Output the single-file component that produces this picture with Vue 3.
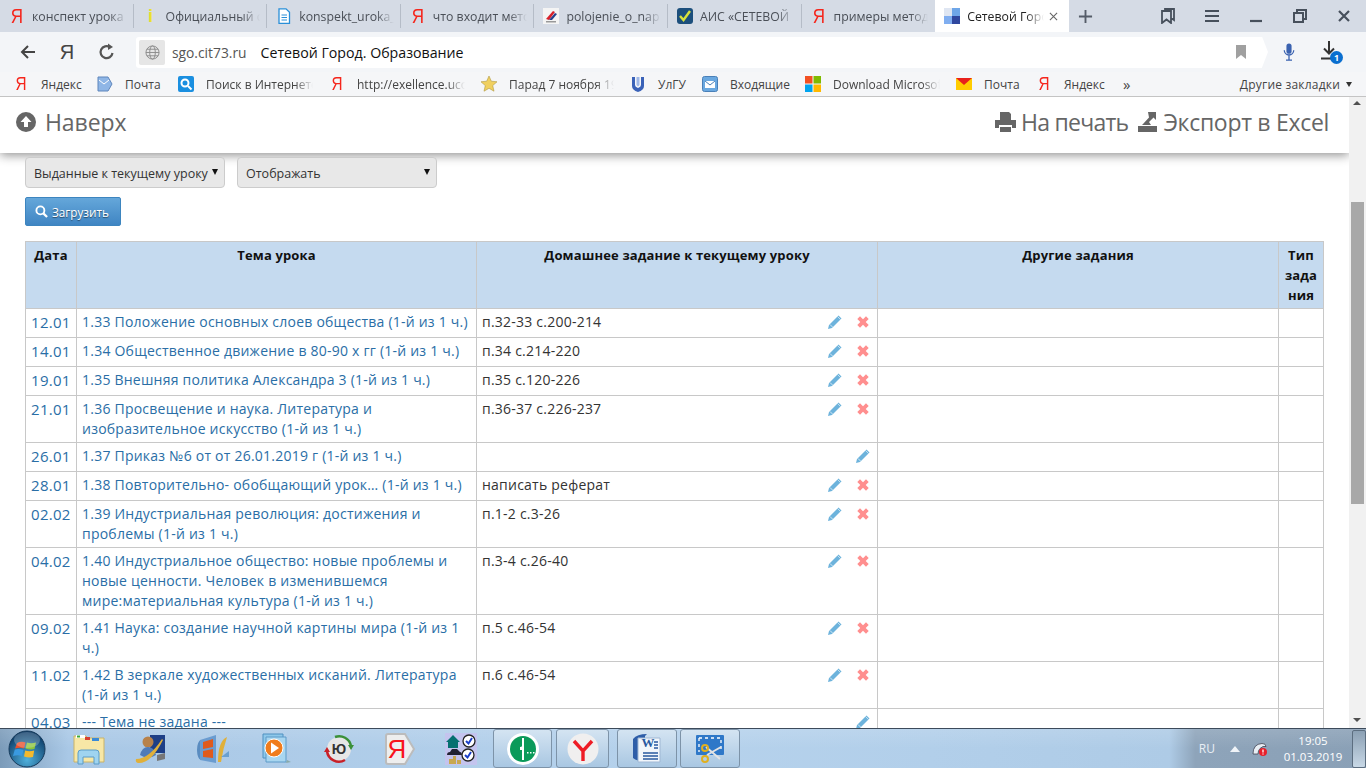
<template>
  <div class="screen">
    <!-- вкладки -->
    <div class="tabs">
      <div
        v-for="t in tabs"
        :key="t.title"
        :class="['tab', { active: t.active }]"
      >
        <span v-if="t.icon === 'ya'" class="ya">Я</span>
        <span v-else-if="t.icon === 'info'" class="info-i">i</span>
        <svg v-else class="tab-ico" viewBox="0 0 16 16"><use :href="'#' + t.icon" /></svg>
        <span class="fade tab-title">{{ t.title }}</span>
        <svg v-if="t.active" class="tab-close" viewBox="0 0 10 10"><path d="M1 1l8 8M9 1l-8 8" /></svg>
      </div>
      <svg class="tab-plus" viewBox="0 0 16 16"><path d="M8 1v14M1 8h14" /></svg>
      <div class="win-btns">
        <svg viewBox="0 0 16 16"><path d="M2 3h9v12l-4.500-3.500L2 15zM5 3V1h9v11l-3-2" fill="none" stroke="#47505c" stroke-width="1.800" /></svg>
        <svg viewBox="0 0 16 16"><path d="M1 3h14M1 8h14M1 13h14" fill="none" stroke="#47505c" stroke-width="2" /></svg>
        <svg viewBox="0 0 16 16"><path d="M2 13h12" fill="none" stroke="#47505c" stroke-width="2.200" /></svg>
        <svg viewBox="0 0 16 16"><path d="M2 5h9v9H2zM5 5V2h9v9h-3" fill="none" stroke="#47505c" stroke-width="2" /></svg>
        <svg viewBox="0 0 16 16"><path d="M3 3l10 10M13 3L3 13" fill="none" stroke="#47505c" stroke-width="2.200" /></svg>
      </div>
    </div>

    <!-- адресная строка -->
    <div class="toolbar">
      <svg class="nav-ico" viewBox="0 0 18 18"><path d="M16 9H3M9 3L3 9l6 6" fill="none" stroke="#444" stroke-width="2" /></svg>
      <span class="nav-ya">Я</span>
      <svg class="nav-ico" viewBox="0 0 18 18"><path d="M14.500 10A6 6 0 1 1 12 4.200" fill="none" stroke="#555" stroke-width="2.200" /><path d="M10 .5l5 3.500-5 3z" fill="#555" /></svg>
      <div class="address">
        <span class="globe-box">
          <svg viewBox="0 0 16 16"><g fill="none" stroke="#8c8c8c"><circle cx="8" cy="8" r="7" /><ellipse cx="8" cy="8" rx="3" ry="7" /><path d="M1 8h14M2 4.500h12M2 11.500h12" /></g></svg>
        </span>
        <span class="host">sgo.cit73.ru</span>
        <span class="page-title">Сетевой Город. Образование</span>
        <svg class="addr-mark" viewBox="0 0 10 14"><path d="M0 0h10v14l-5-4-5 4z" /></svg>
      </div>
      <svg class="mic" viewBox="0 0 14 22"><rect x="4" y="1" width="6" height="12" rx="3" fill="#3a62b0" /><path d="M1.500 9a5.500 5.500 0 0 0 11 0M7 15v5M3.500 20.500h7" fill="none" stroke="#3a62b0" stroke-width="1.500" /></svg>
      <div class="download">
        <svg viewBox="0 0 16 20"><path d="M8 1v12M3 8.500l5 5 5-5M0 18.500h13" fill="none" stroke="#333" stroke-width="2" /></svg>
        <span class="dl-badge">1</span>
      </div>
    </div>

    <!-- закладки -->
    <div class="bookmarks">
      <div
        v-for="b in bookmarks"
        :key="b.text + b.w"
        class="bm"
        :style="{ width: b.w + 'px' }"
      >
        <span v-if="b.icon === 'ya'" class="ya">Я</span>
        <svg v-else class="bm-ico" viewBox="0 0 16 16"><use :href="'#' + b.icon" /></svg>
        <span :class="['bm-title', { fade: b.cut }]">{{ b.text }}</span>
      </div>
      <span class="bm-more">»</span>
      <span class="bm-other">Другие закладки</span>
      <span class="bm-caret"></span>
    </div>

    <!-- страница -->
    <div class="viewport">
      <div class="page">
        <div class="topbar">
          <a class="top-link">
            <svg class="up-ico" viewBox="0 0 20 20"><circle cx="10" cy="10" r="10" fill="#666" /><path d="M10 4l5.500 6H12v5H8v-5H4.500z" fill="#fff" /></svg>
            Наверх
          </a>
          <div class="top-right">
            <a class="top-link print-link">
              <svg class="print-ico" viewBox="0 0 21 20"><path d="M5 0h9l2 2v6H5zM0 8h21v8h-4v-3H4v3H0zM5 15h11v5H5z" fill="#666" /></svg>
              На печать
            </a>
            <a class="top-link">
              <svg class="export-ico" viewBox="0 0 19 20"><path d="M0 14h19v6H0zM10 0h8v8l-2.500-2.500L11 10l2 3H4l1-1 6-6.500z" fill="#666" /></svg>
              Экспорт в Excel
            </a>
          </div>
        </div>

        <div class="content">
          <div class="filters">
            <label class="sel-wrap"><select class="sel"><option>Выданные к текущему уроку</option></select></label>
            <label class="sel-wrap"><select class="sel"><option>Отображать</option></select></label>
          </div>
          <button class="load-btn">
            <svg viewBox="0 0 14 14"><circle cx="5.800" cy="5.800" r="4.300" fill="none" stroke="#fff" stroke-width="2" /><path d="M9 9l4 4" stroke="#fff" stroke-width="2.400" /></svg>
            Загрузить
          </button>

          <table class="lessons">
            <colgroup>
              <col class="c-date" />
              <col class="c-topic" />
              <col class="c-hw" />
              <col class="c-other" />
              <col class="c-type" />
            </colgroup>
            <thead>
              <tr>
                <th>Дата</th>
                <th>Тема урока</th>
                <th>Домашнее задание к текущему уроку</th>
                <th>Другие задания</th>
                <th>Тип<br />зада<br />ния</th>
              </tr>
            </thead>
            <tbody>
              <tr v-for="r in rows" :key="r.date">
                <td><a class="date">{{ r.date }}</a></td>
                <td><a>{{ r.topic }}</a></td>
                <td>
                  <div class="hw">
                    <span class="hw-text">{{ r.hw }}</span>
                    <svg class="pencil" viewBox="0 0 16 16"><use href="#pencil" /></svg>
                    <svg v-if="r.hw" class="remove" viewBox="0 0 12 12"><use href="#cross" /></svg>
                  </div>
                </td>
                <td></td>
                <td></td>
              </tr>
            </tbody>
          </table>
        </div>
      </div>

      <div class="scrollbar">
        <span class="arrow-up"></span>
        <div class="thumb"></div>
        <span class="arrow-down"></span>
      </div>
    </div>

    <!-- панель задач -->
    <div class="taskbar">
      <div class="start">
        <svg viewBox="0 0 38 38">
          <defs>
            <radialGradient id="orb" cx="50%" cy="80%" r="75%">
              <stop offset="0" stop-color="#4fb0dc" />
              <stop offset="1" stop-color="#0b3a66" />
            </radialGradient>
          </defs>
          <circle cx="19" cy="19" r="18" fill="url(#orb)" stroke="#173a5a" />
          <path d="M9 13q4-2 8.500-.5L16 18.500q-4-1.500-9 0z" fill="#e8502c" />
          <path d="M19 12.500q4 1.500 9 0l-1.500 6.500q-4 1-9-.5z" fill="#8cc43c" />
          <path d="M6.800 19.500q4-1 8.700.5L14 26q-4-1.500-9 0z" fill="#3a9ae0" />
          <path d="M17.200 20.500q4 1.500 9 0L25 27q-4 1-9-.5z" fill="#f4b92c" />
          <ellipse cx="19" cy="10" rx="13" ry="8" fill="#fff" opacity=".22" />
        </svg>
      </div>

      <div v-for="a in pinned" :key="a.id" class="pin" :style="{ width: a.w + 'px' }">
        <svg class="app-ico" viewBox="0 0 32 32"><use :href="'#' + a.id" /></svg>
        <span v-if="a.glyph" :class="['app-glyph', 'glyph-' + a.id]">{{ a.glyph }}</span>
      </div>

      <div v-for="a in running" :key="a.id" class="run" :style="{ width: a.w + 'px', marginLeft: a.gap + 'px' }">
        <svg class="app-ico" viewBox="0 0 32 32"><use :href="'#' + a.id" /></svg>
        <span v-if="a.glyph" :class="['app-glyph', 'glyph-' + a.id]">{{ a.glyph }}</span>
      </div>

      <div class="tray">
        <span class="tray-lang">RU</span>
        <span class="tray-up"></span>
        <svg class="tray-ico" viewBox="0 0 16 14">
          <path d="M1 12Q1 2 10 1.500q4 0 4 3-3-1-6 2-2 2-2 5.500z" fill="#e8eef4" stroke="#334" stroke-width=".7" />
          <circle cx="11" cy="10" r="4" fill="#e8202a" />
          <path d="M11 7.500v3M11 11.500v1" stroke="#fff" stroke-width="1.300" />
        </svg>
        <div class="clock">
          <span>19:05</span>
          <span>01.03.2019</span>
        </div>
        <div class="show-desktop"></div>
      </div>
    </div>

    <!-- значки -->
    <svg class="defs">
      <symbol id="doc" viewBox="0 0 16 16"><path d="M3 .8h7l3.500 3.500v11H3z" fill="#fff" stroke="#2a8fd8" stroke-width="1.300" /><path d="M5.500 7h5.500M5.500 9.500h5.500M5.500 12h5.500" stroke="#2a8fd8" /></symbol>
      <symbol id="flag" viewBox="0 0 16 16"><rect width="16" height="16" fill="#f4f4f4" /><path d="M3 11L10 3l2 1-6 8z" fill="#d8202a" /><path d="M6 12l6-7 2 1-5 6z" fill="#27408b" /><rect x="3" y="13" width="10" height="1.500" fill="#999" /></symbol>
      <symbol id="check" viewBox="0 0 16 16"><rect width="16" height="16" rx="3" fill="#1c4f7c" /><path d="M3 8l3.500 4L13 3" fill="none" stroke="#d8e23c" stroke-width="2.400" /></symbol>
      <symbol id="sgo" viewBox="0 0 16 16"><rect width="16" height="16" fill="#dfe6f2" /><rect x="8" width="8" height="8" fill="#6ea6e8" /><rect y="8" width="8" height="8" fill="#80aef0" /><rect x="8" y="8" width="8" height="8" fill="#2f479f" /></symbol>
      <symbol id="mail" viewBox="0 0 16 16"><path d="M1 1h10l4 7-4 7H1z" fill="#8fb6e6" stroke="#5f86bc" /><path d="M2 4l5 4 5-4" fill="none" stroke="#fff" /></symbol>
      <symbol id="search" viewBox="0 0 16 16"><rect width="16" height="16" rx="2" fill="#1a8fe0" /><circle cx="7" cy="7" r="3.500" fill="none" stroke="#fff" stroke-width="2" /><path d="M10 10l3.500 3.500" stroke="#fff" stroke-width="2" /></symbol>
      <symbol id="star" viewBox="0 0 16 16"><path d="M8 0l2.300 5.200 5.700.6-4.300 3.800 1.300 5.600L8 12.300l-5 2.900 1.300-5.600L0 5.800l5.700-.6z" fill="#f0d060" stroke="#b09840" stroke-width=".6" /></symbol>
      <symbol id="ulgu" viewBox="0 0 16 16"><path d="M2 1h3v8q0 2 3 3 3-1 3-3V1h3v9q0 4-6 6-6-2-6-6z" fill="#3a62b8" /><path d="M6.500 1h3v8l-1.500 1.500L6.500 9z" fill="#9fb8e8" /></symbol>
      <symbol id="inbox" viewBox="0 0 16 16"><rect x=".5" y=".5" width="15" height="15" rx="2" fill="#6aa8e0" stroke="#4a80b8" /><rect x="3" y="5" width="10" height="7" fill="#fff" /><path d="M3 5l5 4 5-4" fill="none" stroke="#4a80b8" /></symbol>
      <symbol id="ms" viewBox="0 0 16 16"><rect width="7.500" height="7.500" fill="#f25022" /><rect x="8.500" width="7.500" height="7.500" fill="#7fba00" /><rect y="8.500" width="7.500" height="7.500" fill="#00a4ef" /><rect x="8.500" y="8.500" width="7.500" height="7.500" fill="#ffb900" /></symbol>
      <symbol id="ymail" viewBox="0 0 16 16"><rect y="2" width="16" height="12" fill="#fc0" /><path d="M0 2h16L8 9z" fill="#e8201c" /></symbol>

      <symbol id="pencil" viewBox="0 0 16 16"><path d="M11.500 1.500l3 3L5 14l-4 1 1-4z" fill="#6db3dc" /><path d="M3 10.500l3 3" stroke="#fff" stroke-width=".7" /><path d="M10.500 2.500l3 3" stroke="#fff" stroke-width=".6" /></symbol>
      <symbol id="cross" viewBox="0 0 12 12"><path d="M3 .3L6 3.300 9 .3 11.700 3 8.700 6l3 3L9 11.700l-3-3-3 3L.3 9l3-3-3-3z" fill="#ff8f8f" /></symbol>

      <symbol id="folder" viewBox="0 0 32 32"><path d="M1 3h12l2 2h16v24H1z" fill="#f7e7a6" stroke="#c9b368" /><path d="M3 2h9v3H3z" fill="#fff" /><path d="M4 2.500h3v2H4z" fill="#3ca838" /><path d="M12 4h5v3h-5z" fill="#d84030" /><path d="M19 5h7v3h-7z" fill="#3a8ad8" /><path d="M5 31V20q0-3 3-3h15q3 0 3 3v11h-5v-7H10v7z" fill="#9fd4f0" stroke="#5a9cc8" /></symbol>
      <symbol id="magnifier" viewBox="0 0 32 32"><path d="M15 2h15v18H15z" fill="#1e3f86" /><path d="M22 22l8-2v6l-8 2z" fill="#777" /><circle cx="13" cy="9" r="5.500" fill="#b8824a" /><path d="M5 22q2-8 8-8t8 8q-8 5-16 0z" fill="#4f7bb8" /><path d="M1 26Q14 26 27 6l1 1Q16 31 3 30q-3-1-2-4z" fill="#e0b03a" /></symbol>
      <symbol id="movie" viewBox="0 0 32 32"><ellipse cx="4" cy="17" rx="4" ry="10" fill="#5a8cc0" /><path d="M3 7l16-5v28L3 27z" fill="#6a9cd0" /><path d="M6 9l10-3v8L6 16zM6 18l10-2v9L6 24z" fill="#e05a1c" /><path d="M21 29q0-21 9-25-4 12-6 25z" fill="#e0b03a" /><path d="M24 24l8-6v6z" fill="#6aa0d0" /></symbol>
      <symbol id="player" viewBox="0 0 32 32"><path d="M3 1h20v24H3z" fill="#8ec8ea" stroke="#4f90c0" /><path d="M6 4h20v25H6z" fill="#a8d6f0" stroke="#5c9ac8" /><path d="M27 27l4 2-5 1z" fill="#8aa" /><circle cx="14" cy="15" r="9" fill="#f07c1c" stroke="#fff" /><path d="M11 9.500l8 5.500-8 5.500z" fill="#fff" /></symbol>
      <symbol id="yu" viewBox="0 0 32 32"><circle cx="17" cy="16" r="12" fill="#e6e6e6" /><path d="M5 18a12 12 0 0 0 18 9" fill="none" stroke="#c82028" stroke-width="2.500" /><path d="M13 4a12 12 0 0 1 16 9" fill="none" stroke="#3a9038" stroke-width="2.500" /><path d="M2 19h6l-3-5z" fill="#c82028" /><path d="M26 12h6l-3 5z" fill="#3a9038" /></symbol>
      <symbol id="yabrowser" viewBox="0 0 32 32"><path d="M2 3q0-2 2-2h17l9 15-9 15H4q-2 0-2-2z" fill="#eeeeee" stroke="#bcbcbc" stroke-width="2" /></symbol>
      <symbol id="tasks" viewBox="0 0 32 32"><rect width="32" height="32" fill="#c4c4ee" /><path d="M1 9l7-7 7 7h-2v6H3V9z" fill="#067070" /><path d="M2 22q0-3 3-3l2-3h5l3 3q2 0 2 3z" fill="#223" /><circle cx="24" cy="8" r="6" fill="#fff" stroke="#222" stroke-width="1.300" /><path d="M21 8l2.500 2.500L27 5" fill="none" stroke="#1a3ec8" stroke-width="2" /><circle cx="23" cy="22" r="6" fill="#fff" stroke="#222" stroke-width="1.300" /><path d="M20 22l2.500 2.500L26 19" fill="none" stroke="#1a3ec8" stroke-width="2" /><path d="M4 31v-5h4v-3h3v8zM12 31v-4h4v4z" fill="#c8a850" /></symbol>
      <symbol id="mts" viewBox="0 0 32 32"><circle cx="16" cy="16" r="16" fill="#fff" /><circle cx="16" cy="16" r="13" fill="#0b9a5a" /><path d="M15 5v8q0 1-2 1v3h2v10h2V5zM20 19h1.500v1.500H20zM23 19h1.500v1.500H23zM26 19h1.500v1.500H26z" fill="#fff" /></symbol>
      <symbol id="ybrowser" viewBox="0 0 32 32"><circle cx="16" cy="16" r="15.500" fill="#f0efef" /><path d="M7 8l9 10 9-10M16 18v10" fill="none" stroke="#ee1c25" stroke-width="3.400" /></symbol>
      <symbol id="word" viewBox="0 0 32 32"><path d="M2 6q4-5 14-5l-2 2v26q-8-1-12-4z" fill="#2f5ea8" /><path d="M7 5h22v24H7z" fill="#f2f6fb" stroke="#a0b8d4" /><path d="M12 20h15M12 23h15M12 26h15M23 9h4M23 12h4M23 15h4" stroke="#2a5aa0" stroke-width="1.300" /></symbol>
      <symbol id="scissors" viewBox="0 0 32 32"><rect x="2" y="2" width="28" height="20" rx="1" fill="#2f78c8" /><path d="M5 5h22v14" fill="none" stroke="#fff" stroke-width="1.300" stroke-dasharray="3 3" /><path d="M5 5v14" fill="none" stroke="#fff" stroke-width="1.300" stroke-dasharray="3 3" /><path d="M27 14L13 22M26 26L12 14" stroke="#e4e4e4" stroke-width="2" /><circle cx="11" cy="15" r="3" fill="none" stroke="#e0b020" stroke-width="2" /><circle cx="11" cy="26" r="3" fill="none" stroke="#e0b020" stroke-width="2" /></symbol>
    </svg>
  </div>
</template>

<script setup>
const tabs = [
  { icon: 'ya', title: 'конспект урока' },
  { icon: 'info', title: 'Официальный сайт' },
  { icon: 'doc', title: 'konspekt_uroka_' },
  { icon: 'ya', title: 'что входит метод' },
  { icon: 'flag', title: 'polojenie_o_nap' },
  { icon: 'check', title: 'АИС «СЕТЕВОЙ' },
  { icon: 'ya', title: 'примеры метод' },
  { icon: 'sgo', title: 'Сетевой Город', active: true }
]

const bookmarks = [
  { icon: 'ya', text: 'Яндекс', w: 84 },
  { icon: 'mail', text: 'Почта', w: 81 },
  { icon: 'search', text: 'Поиск в Интернете', w: 151, cut: true },
  { icon: 'ya', text: 'http://exellence.ucoz', w: 152, cut: true },
  { icon: 'star', text: 'Парад 7 ноября 1941', w: 149, cut: true },
  { icon: 'ulgu', text: 'УлГУ', w: 72 },
  { icon: 'inbox', text: 'Входящие', w: 103 },
  { icon: 'ms', text: 'Download Microsoft', w: 151, cut: true },
  { icon: 'ymail', text: 'Почта', w: 80 },
  { icon: 'ya', text: 'Яндекс', w: 82 }
]

const rows = [
  { date: '12.01', topic: '1.33 Положение основных слоев общества (1-й из 1 ч.)', hw: 'п.32-33 с.200-214' },
  { date: '14.01', topic: '1.34 Общественное движение в 80-90 х гг (1-й из 1 ч.)', hw: 'п.34 с.214-220' },
  { date: '19.01', topic: '1.35 Внешняя политика Александра 3 (1-й из 1 ч.)', hw: 'п.35 с.120-226' },
  { date: '21.01', topic: '1.36 Просвещение и наука. Литература и изобразительное искусство (1-й из 1 ч.)', hw: 'п.36-37 с.226-237' },
  { date: '26.01', topic: '1.37 Приказ №6 от от 26.01.2019 г (1-й из 1 ч.)', hw: '' },
  { date: '28.01', topic: '1.38 Повторительно- обобщающий урок… (1-й из 1 ч.)', hw: 'написать реферат' },
  { date: '02.02', topic: '1.39 Индустриальная революция: достижения и проблемы (1-й из 1 ч.)', hw: 'п.1-2 с.3-26' },
  { date: '04.02', topic: '1.40 Индустриальное общество: новые проблемы и новые ценности. Человек в изменившемся мире:материальная культура (1-й из 1 ч.)', hw: 'п.3-4 с.26-40' },
  { date: '09.02', topic: '1.41 Наука: создание научной картины мира (1-й из 1 ч.)', hw: 'п.5 с.46-54' },
  { date: '11.02', topic: '1.42 В зеркале художественных исканий. Литература (1-й из 1 ч.)', hw: 'п.6 с.46-54' },
  { date: '04.03', topic: '--- Тема не задана ---', hw: '' }
]

const pinned = [
  { id: 'folder', w: 62 },
  { id: 'magnifier', w: 62 },
  { id: 'movie', w: 62 },
  { id: 'player', w: 63 },
  { id: 'yu', w: 62, glyph: 'Ю' },
  { id: 'yabrowser', w: 61, glyph: 'Я' },
  { id: 'tasks', w: 62 }
]

const running = [
  { id: 'mts', w: 59, gap: 1 },
  { id: 'ybrowser', w: 53, gap: 4 },
  { id: 'word', w: 60, gap: 8, glyph: 'W' },
  { id: 'scissors', w: 60, gap: 3 }
]
</script>

<style scoped>
.screen {
  width: 1366px;
  height: 768px;
  display: flex;
  flex-direction: column;
  overflow: hidden;
  font-family: "Open Sans", "Noto Sans", sans-serif;
  color: #333;
}

.defs {
  position: absolute;
  width: 0;
  height: 0;
}

.fade {
  white-space: nowrap;
  overflow: hidden;
  -webkit-mask-image: linear-gradient(to right, #000 calc(100% - 18px), transparent);
  mask-image: linear-gradient(to right, #000 calc(100% - 18px), transparent);
}

.ya {
  width: 20px;
  flex: none;
  text-align: center;
  font-family: "Liberation Sans", sans-serif;
  font-size: 20px;
  color: #f5261c;
  transform: scaleX(0.85);
}

/* Вкладки */
.tabs {
  height: 32px;
  flex: none;
  display: flex;
  align-items: center;
  background: #d5dbe5;
}

.tab {
  width: 133.6px;
  height: 32px;
  box-sizing: border-box;
  padding: 0 7px 0 7px;
  display: flex;
  align-items: center;
  gap: 5px;
  font-size: 12.3px;
  color: #4a4f57;
  position: relative;
  flex: none;
}

.tab:not(.active):not(:nth-child(7))::after {
  content: "";
  position: absolute;
  right: 0;
  top: 4px;
  bottom: 4px;
  width: 1px;
  background: #b5bcc7;
}

.tab.active {
  background: #fff;
  color: #222;
  padding-right: 11px;
}

.tab-title {
  flex: 1;
}

.info-i {
  width: 20px;
  flex: none;
  text-align: center;
  font-family: "Liberation Sans", sans-serif;
  font-weight: bold;
  font-size: 18px;
  color: #e8e030;
}

.tab-ico {
  width: 16px;
  height: 16px;
  flex: none;
  margin: 0 2px;
}

.tab-close {
  width: 9px;
  height: 9px;
  flex: none;
  stroke: #666;
  stroke-width: 1.2;
  fill: none;
}

.tab-plus {
  width: 15px;
  height: 15px;
  margin-left: 9px;
  flex: none;
  fill: none;
  stroke: #555c68;
  stroke-width: 2;
}

.win-btns {
  margin-left: auto;
  display: flex;
  gap: 28px;
  padding-right: 14px;
}

.win-btns svg {
  width: 16px;
  height: 16px;
}

/* Адресная строка */
.toolbar {
  height: 40px;
  flex: none;
  display: flex;
  align-items: center;
  background: #f3f5f8;
  padding-left: 19px;
}

.nav-ico {
  width: 18px;
  height: 18px;
  flex: none;
}

.nav-ya {
  width: 20px;
  margin: 0 21px 0 20px;
  text-align: center;
  font-family: "Liberation Sans", sans-serif;
  font-size: 20px;
  color: #444;
}

.address {
  margin-left: 20px;
  width: 1126px;
  height: 31px;
  background: #fff;
  display: flex;
  align-items: center;
  border-radius: 3px 0 0 3px;
  position: relative;
}

.address::after {
  content: "";
  position: absolute;
  right: -6px;
  top: 0;
  bottom: 0;
  width: 6px;
  background: #fff;
  clip-path: polygon(0 0, 100% 50%, 0 100%);
}

.globe-box {
  width: 26px;
  height: 25px;
  margin-left: 3px;
  background: #e6e6e6;
  border-radius: 2px;
  display: flex;
  align-items: center;
  justify-content: center;
}

.globe-box svg {
  width: 15px;
  height: 15px;
}

.host {
  margin-left: 7px;
  font-size: 13.8px;
  color: #555;
}

.page-title {
  margin-left: 14px;
  font-size: 14.2px;
  color: #111;
}

.addr-mark {
  margin-left: auto;
  margin-right: 16px;
  width: 10px;
  height: 14px;
  fill: #a0a0a0;
}

.mic {
  width: 12px;
  height: 22px;
  margin-left: 21px;
  flex: none;
}

.download {
  width: 30px;
  height: 24px;
  margin-left: 26px;
  position: relative;
}

.download svg {
  width: 16px;
  height: 20px;
}

.dl-badge {
  position: absolute;
  left: 9px;
  top: 11px;
  width: 13px;
  height: 13px;
  border-radius: 50%;
  background: #0a6fd0;
  color: #fff;
  font-size: 9px;
  font-weight: bold;
  line-height: 13px;
  text-align: center;
}

/* Закладки */
.bookmarks {
  height: 24px;
  flex: none;
  display: flex;
  align-items: center;
  padding-left: 11px;
  background: #f5f6f8;
  border-bottom: 1px solid #c4c4c4;
  font-size: 12px;
  color: #444;
}

.bm {
  display: flex;
  align-items: center;
  gap: 10px;
  height: 23px;
  flex: none;
  min-width: 0;
}

.bm .ya {
  font-size: 18px;
}

.bm-ico {
  width: 16px;
  height: 16px;
  margin: 0 2px;
  flex: none;
}

.bm-title {
  flex: 1;
  min-width: 0;
  margin-right: 14px;
  white-space: nowrap;
}

.bm-more {
  margin-left: 7px;
  font-size: 15px;
}

.bm-other {
  margin-left: auto;
  letter-spacing: 0.2px;
}

.bm-caret {
  margin: 0 14px 0 6px;
  border: 3.5px solid transparent;
  border-top: 5px solid #333;
  border-bottom: 0;
}

/* Страница */
.viewport {
  height: 631px;
  flex: none;
  display: flex;
  overflow: hidden;
}

.page {
  flex: 1;
  min-width: 0;
  overflow: hidden;
}

.topbar {
  height: 56px;
  box-sizing: border-box;
  padding: 0 20px 6px 16px;
  display: flex;
  align-items: center;
  justify-content: space-between;
  background: #fff;
  box-shadow: 0 2px 10px rgba(0, 0, 0, 0.45);
  position: relative;
}

.top-right {
  display: flex;
  gap: 10px;
}

.top-link {
  display: flex;
  align-items: center;
  gap: 9px;
  font-size: 23px;
  letter-spacing: -0.1px;
  color: #666;
}

.top-right .top-link {
  gap: 6px;
  letter-spacing: -0.3px;
}

.top-right .print-link {
  gap: 5px;
  letter-spacing: -0.75px;
}

.up-ico {
  width: 20px;
  height: 20px;
}

.print-ico {
  width: 21px;
  height: 20px;
}

.export-ico {
  width: 19px;
  height: 20px;
}

.content {
  padding: 4px 0 0 25px;
}

.filters {
  display: flex;
  gap: 12px;
  margin-bottom: 9px;
}

.sel-wrap {
  position: relative;
  display: block;
  height: 31px;
}

.sel-wrap::after {
  content: "";
  position: absolute;
  right: 7px;
  top: 12px;
  border: 3.5px solid transparent;
  border-top: 6px solid #111;
  border-bottom: 0;
  pointer-events: none;
}

.sel {
  display: block;
  width: 200px;
  height: 31px;
  padding: 1px 4px 0 8px;
  appearance: none;
  background: #e8e8e8;
  border: 1px solid #ccc;
  border-radius: 4px;
  font-family: "Open Sans", sans-serif;
  font-size: 12.5px;
  color: #333;
}

.load-btn {
  width: 96px;
  height: 29px;
  display: flex;
  align-items: center;
  gap: 4px;
  padding: 0 0 0 9px;
  border: 1px solid #3d85bf;
  border-radius: 2px;
  background: linear-gradient(#65a7da, #3f85c3);
  color: #fff;
  font-family: "Open Sans", sans-serif;
  font-size: 11.7px;
  text-shadow: 0 1px 1px rgba(0, 0, 0, 0.5);
}

.load-btn svg {
  width: 13px;
  height: 13px;
}

/* Таблица */
.lessons {
  margin-top: 15px;
  width: 1298px;
  border-collapse: collapse;
  table-layout: fixed;
  font-size: 14px;
  line-height: 20px;
}

.c-date { width: 51px; }
.c-topic { width: 400px; }
.c-hw { width: 401px; }
.c-other { width: 401px; }
.c-type { width: 45px; }

.lessons th,
.lessons td {
  border: 1px solid #c8c8c8;
  padding: 3px 5px;
  vertical-align: top;
}

.lessons th {
  background: #c5daef;
  color: #111;
  font-size: 13px;
  font-weight: 700;
  letter-spacing: 0.15px;
  text-align: center;
}

.lessons td {
  height: 29px;
  box-sizing: border-box;
  color: #333;
  letter-spacing: 0.23px;
}

.lessons a {
  color: #2a6ea6;
}

.lessons .date {
  font-size: 15px;
  letter-spacing: 0.3px;
}

.hw {
  display: flex;
  align-items: center;
  height: 20px;
  padding-right: 3px;
}

.hw-text {
  flex: 1;
}

.pencil {
  width: 16px;
  height: 16px;
}

.pencil:last-child {
  margin-right: -2px;
}

.remove {
  width: 12px;
  height: 12px;
  margin-left: 14px;
}

/* Прокрутка */
.scrollbar {
  width: 17px;
  flex: none;
  position: relative;
  background: #f1f1f1;
}

.thumb {
  position: absolute;
  left: 2px;
  right: 2px;
  top: 105px;
  height: 302px;
  background: #a8a8a8;
}

.arrow-up,
.arrow-down {
  position: absolute;
  left: 4px;
  border: 4px solid transparent;
}

.arrow-up {
  top: 4px;
  border-top: 0;
  border-bottom: 4px solid #505050;
}

.arrow-down {
  bottom: 6px;
  border-bottom: 0;
  border-top: 4px solid #505050;
}

/* Панель задач */
.taskbar {
  height: 40px;
  flex: none;
  display: flex;
  align-items: center;
  background:
    linear-gradient(rgba(255, 255, 255, 0.12), rgba(255, 255, 255, 0) 50%),
    linear-gradient(to right, #7b9bb9, #a9c8e6 5%, #b6d2ec 50%, #b2cfea 68%, #aecbe6 85.6%, #8ea4ba 87.5%, #8aa0b6);
  border-top: 1px solid #3c4a5a;
  box-sizing: border-box;
}

.start {
  width: 58px;
  flex: none;
  padding-left: 8px;
  box-sizing: border-box;
  display: flex;
}

.start svg {
  width: 38px;
  height: 38px;
}

.pin,
.run {
  flex: none;
  display: flex;
  justify-content: center;
  position: relative;
}

.run {
  height: 39px;
  align-items: center;
  border: 1px solid #7d93a8;
  border-radius: 3px;
  box-sizing: border-box;
  background: linear-gradient(#d4e4f2, #a9c7e2);
}

.app-ico {
  width: 32px;
  height: 32px;
}

.app-glyph {
  position: absolute;
  left: 0;
  right: 0;
  top: 0;
  text-align: center;
  font-family: "Liberation Sans", sans-serif;
  line-height: 32px;
}

.glyph-yu {
  left: 2px;
  font-size: 14px;
  font-weight: 700;
  color: #333;
}

.glyph-yabrowser {
  right: 5px;
  font-size: 26px;
  color: #f8141c;
}

.glyph-word {
  left: 2px;
  top: 5px;
  font-family: "Liberation Serif", serif;
  font-size: 13px;
  font-weight: 700;
  line-height: 16px;
  color: #2a5aa0;
}

.tray {
  margin-left: auto;
  display: flex;
  align-items: center;
  color: #fff;
  height: 100%;
}

.tray-lang {
  font-size: 12px;
  margin-right: 15px;
  color: #e8eef4;
}

.tray-up {
  border: 5px solid transparent;
  border-bottom: 6px solid #f0f4f8;
  border-top: 0;
  margin-right: 12px;
}

.tray-ico {
  width: 16px;
  height: 14px;
  margin-right: 15px;
}

.clock {
  width: 60px;
  display: flex;
  flex-direction: column;
  align-items: center;
  font-size: 11.5px;
  line-height: 16px;
  margin-right: 9px;
}

.show-desktop {
  width: 14px;
  height: 38px;
  border: 1px solid #5c6e80;
  border-radius: 2px;
  background: linear-gradient(#8ba0b4, #c8d8e6);
  box-sizing: border-box;
}
</style>

<style>
html, body {
  margin: 0;
  overflow: hidden;
}
</style>
